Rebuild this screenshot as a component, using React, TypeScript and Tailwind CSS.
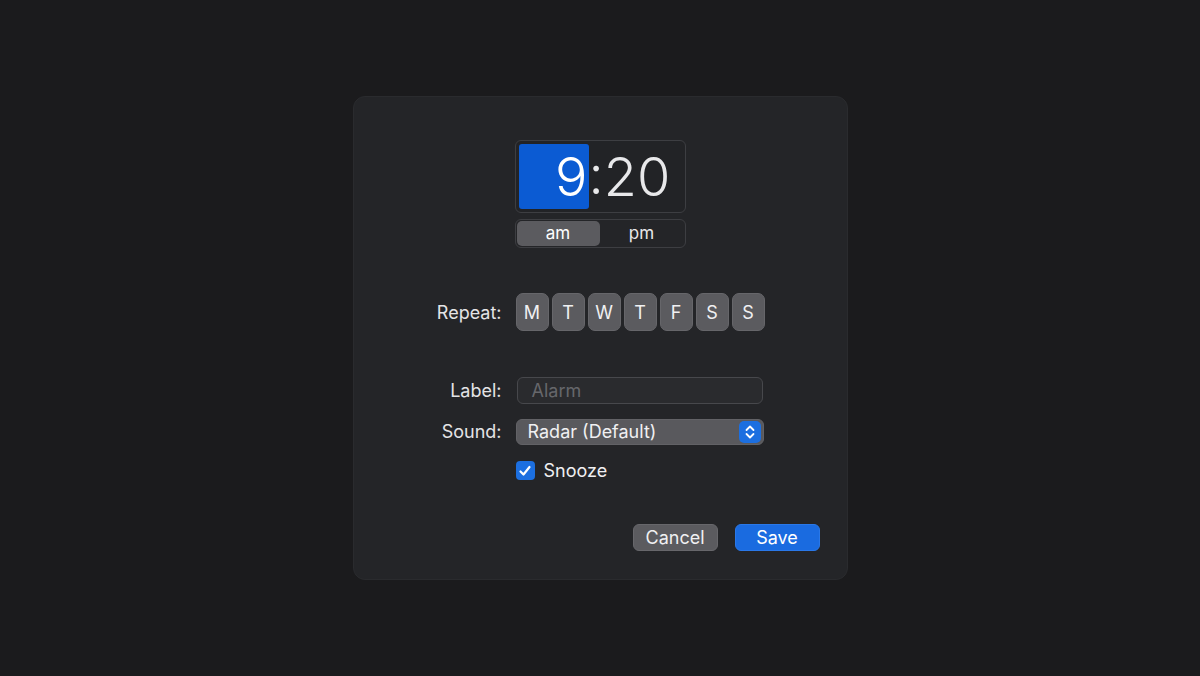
import React from "react";

const days = ["M", "T", "W", "T", "F", "S", "S"];

export default function App() {
  return (
    <div
      className="w-[1200px] h-[676px] bg-[#1b1b1d] flex items-center justify-center text-[#e4e4e6]"
      style={{ fontFamily: "Inter, 'Liberation Sans', sans-serif" }}
    >
      <div className="w-[495px] h-[484px] rounded-[12px] bg-[#242528] border border-[#2a2b2e] flex flex-col items-center pt-[43px]">
        {/* time */}
        <div className="w-[171px] flex flex-col">
          <div className="h-[73px] rounded-[6px] border border-[#3d3e42] bg-[#222326] p-[3px] flex items-center">
            <div className="w-[70px] h-[65px] rounded-[3px] bg-[#0b5bd3] flex items-center justify-end pr-[1px]">
              <span className="text-[54px] leading-none font-light text-white">9</span>
            </div>
            <span className="text-[54px] leading-none font-light text-[#e8e8ea] -mt-[4px]">:</span>
            <span className="text-[54px] leading-none font-light text-[#e8e8ea]">20</span>
          </div>
          <div className="mt-[6px] h-[29px] rounded-[6px] border border-[#3d3e42] bg-[#242528] flex p-[1px]">
            <div className="w-[83px] rounded-[5px] bg-[#5b5b5f] flex items-center justify-center text-[17px] text-white">
              am
            </div>
            <div className="flex-1 flex items-center justify-center text-[17px] text-[#e8e8ea]">pm</div>
          </div>
        </div>

        {/* repeat */}
        <div className="self-stretch mt-[45px] flex items-center">
          <div className="w-[148px] text-right text-[18px]">Repeat:</div>
          <div className="ml-[14px] flex gap-[3px]">
            {days.map((d, i) => (
              <div
                key={i}
                className="w-[33px] h-[38px] rounded-[7px] bg-[#5b5b5f] border border-[#66666a] flex items-center justify-center text-[18px] text-[#f0f0f2]"
              >
                {d}
              </div>
            ))}
          </div>
        </div>

        {/* label */}
        <div className="self-stretch mt-[46px] flex items-center">
          <div className="w-[148px] text-right text-[18px]">Label:</div>
          <div className="ml-[15px] w-[246px] h-[27px] rounded-[6px] border border-[#47484c] bg-[#2a2b2e] flex items-center pl-[14px] text-[18px] text-[#66676b]">
            Alarm
          </div>
        </div>

        {/* sound */}
        <div className="self-stretch mt-[14px] flex items-center">
          <div className="w-[148px] text-right text-[18px]">Sound:</div>
          <div className="ml-[14px] w-[248px] h-[26px] rounded-[6px] bg-[#59595d] border border-[#626266] flex items-center pl-[11px] pr-[2px] text-[18px] text-[#f0f0f2]">
            <span className="flex-1">Radar (Default)</span>
            <div className="w-[22px] h-[22px] rounded-[5px] bg-[#1c6fe0] flex items-center justify-center">
              <svg width="12" height="16" viewBox="0 0 12 16" fill="none" stroke="white" strokeWidth="1.8" strokeLinecap="round" strokeLinejoin="round">
                <path d="M2.5 6 L6 2.5 L9.5 6" />
                <path d="M2.5 10 L6 13.5 L9.5 10" />
              </svg>
            </div>
          </div>
        </div>

        {/* snooze */}
        <div className="self-stretch mt-[12px] flex items-center">
          <div className="w-[148px]" />
          <div className="ml-[14px] w-[19px] h-[19px] rounded-[4px] bg-[#1c6fe0] flex items-center justify-center">
            <svg width="14" height="14" viewBox="0 0 14 14" fill="none" stroke="white" strokeWidth="2.2" strokeLinecap="round" strokeLinejoin="round">
              <path d="M2.5 7.5 L5.5 10.5 L11.5 3" />
            </svg>
          </div>
          <span className="ml-[9px] text-[18px] text-[#f0f0f2]">Snooze</span>
        </div>

        {/* buttons */}
        <div className="self-stretch mt-[40px] flex justify-end pr-[27px] gap-[17px]">
          <div className="w-[85px] h-[27px] rounded-[6px] bg-[#5b5b5f] border border-[#67676b] flex items-center justify-center text-[18px] text-[#f0f0f2]">
            Cancel
          </div>
          <div className="w-[85px] h-[27px] rounded-[6px] bg-[#1a6be0] border border-[#2a78e8] flex items-center justify-center text-[18px] text-white">
            Save
          </div>
        </div>
      </div>
    </div>
  );
}
